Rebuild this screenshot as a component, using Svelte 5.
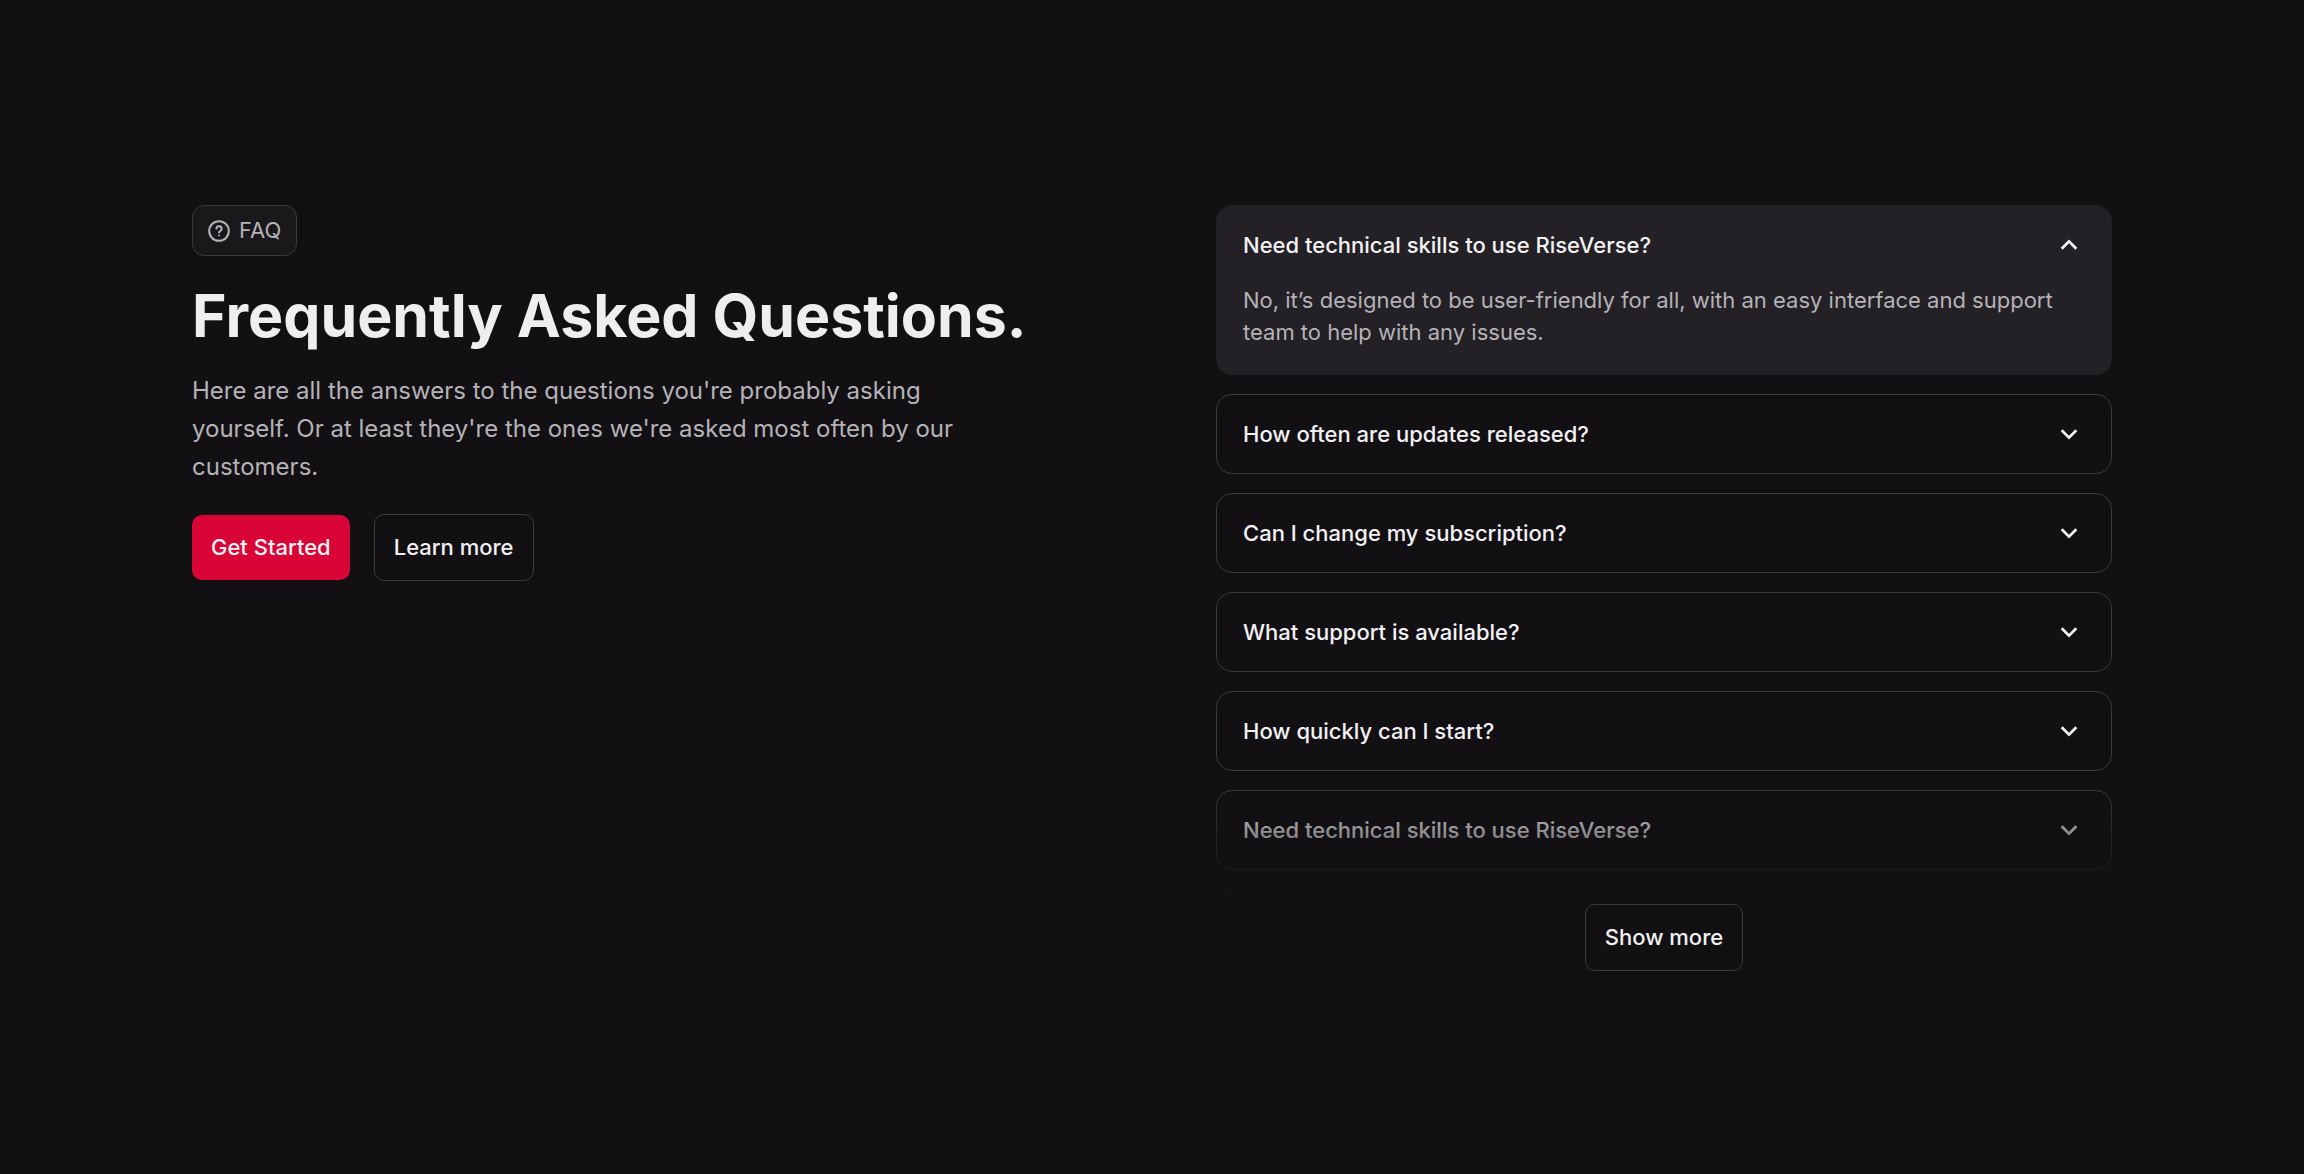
<script lang="ts">
    interface Faq {
        question: string;
        answer: string;
    }

    const faqs: Faq[] = [
        {
            question: 'Need technical skills to use RiseVerse?',
            answer: 'No, it’s designed to be user-friendly for all, with an easy interface and support team to help with any issues.',
        },
        {
            question: 'How often are updates released?',
            answer: 'Updates are released regularly.',
        },
        {
            question: 'Can I change my subscription?',
            answer: 'Yes, you can change it at any time.',
        },
        {
            question: 'What support is available?',
            answer: 'Our support team helps with any issues.',
        },
        {
            question: 'How quickly can I start?',
            answer: 'You can start right away.',
        },
        {
            question: 'Need technical skills to use RiseVerse?',
            answer: 'No, it’s designed to be user-friendly for all.',
        },
        {
            question: 'How often are updates released?',
            answer: 'Updates are released regularly.',
        },
    ];

    let openIndex = $state(0);
    let expanded = $state(false);

    function toggle(index: number) {
        openIndex = openIndex === index ? -1 : index;
    }
</script>

<section class="faq">
    <div class="container">
        <div class="intro">
            <span class="badge">
                <svg class="badge-icon" viewBox="0 0 22 22" fill="none" stroke="currentColor" stroke-width="2" stroke-linecap="round" stroke-linejoin="round" aria-hidden="true">
                    <circle cx="11" cy="11" r="9.8" />
                    <path d="M8.4 8.6a2.6 2.6 0 0 1 5.2 .4c0 1.8-2.5 2-2.6 3.6" />
                    <path d="M11 15.6h.01" />
                </svg>
                FAQ
            </span>
            <h2 class="title">Frequently Asked Questions.</h2>
            <p class="lead">
                Here are all the answers to the questions you're probably asking yourself. Or at least they're the ones we're asked most often by our customers.
            </p>
            <div class="actions">
                <button class="btn btn-primary">Get Started</button>
                <button class="btn btn-outline">Learn more</button>
            </div>
        </div>

        <div class="list">
            {#each faqs as faq, i}
                <div class="item" class:open={openIndex === i}>
                    <button class="question" aria-expanded={openIndex === i} onclick={() => toggle(i)}>
                        {faq.question}
                        <svg class="chevron" viewBox="0 0 24 24" fill="none" stroke="currentColor" stroke-width="3" aria-hidden="true">
                            <path d="M4 8l8 8 8-8" />
                        </svg>
                    </button>
                    {#if openIndex === i}
                        <p class="answer">{faq.answer}</p>
                    {/if}
                </div>
            {/each}
            {#if !expanded}
                <div class="fade">
                    <button class="btn btn-outline" onclick={() => (expanded = true)}>Show more</button>
                </div>
            {/if}
        </div>
    </div>
</section>

<style>
    :global(body) {
        margin: 0;
        background: #121013;
    }

    .faq {
        display: flex;
        align-items: center;
        justify-content: center;
        box-sizing: border-box;
        min-height: 100vh;
        padding: 64px;
        font-family: Inter, "Liberation Sans", sans-serif;
        color: #f2f1f4;
    }

    .container {
        display: grid;
        grid-template-columns: repeat(2, minmax(0, 1fr));
        gap: 128px;
        width: 100%;
        max-width: 1920px;
    }

    .intro {
        display: flex;
        flex-direction: column;
        align-items: flex-start;
    }

    .badge {
        display: flex;
        align-items: center;
        gap: 9px;
        padding: 8px 15px;
        border: 1px solid #3c3a3f;
        border-radius: 12px;
        background: #1a181b;
        color: #b5b2b8;
        font-size: 22px;
        line-height: 33px;
    }

    .badge-icon {
        width: 22px;
        height: 22px;
    }

    .title {
        margin: 24px 0 20px;
        color: #eeedf0;
        font-size: 59px;
        font-weight: 700;
        line-height: 72px;
    }

    .lead {
        max-width: 768px;
        margin: 0;
        color: #b5b2b8;
        font-size: 24px;
        line-height: 38px;
    }

    .actions {
        display: flex;
        align-items: center;
        gap: 24px;
        margin-top: 28px;
    }

    .btn {
        padding: 16px 19px;
        border: none;
        border-radius: 10px;
        font-family: inherit;
        font-size: 22px;
        font-weight: 500;
        line-height: 33px;
        color: inherit;
        cursor: pointer;
    }

    .btn-primary {
        background: #d90537;
    }

    .btn-outline {
        border: 1px solid #3c3a3f;
        background: #121013;
    }

    .list {
        position: relative;
        display: flex;
        flex-direction: column;
        gap: 19px;
    }

    .item {
        border: 1px solid #3c3a3f;
        border-radius: 16px;
    }

    .item.open {
        border-color: #232125;
        background: #232125;
    }

    .question {
        display: flex;
        align-items: center;
        justify-content: space-between;
        width: 100%;
        padding: 23px 31px 23px 26px;
        border: none;
        background: none;
        font-family: inherit;
        font-size: 22px;
        font-weight: 500;
        line-height: 32px;
        text-align: left;
        color: inherit;
        cursor: pointer;
    }

    .chevron {
        width: 22px;
        height: 22px;
    }

    .open .chevron {
        transform: rotate(180deg);
    }

    .answer {
        margin: 0;
        padding: 0 26px 26px;
        color: #b5b2b8;
        font-size: 22px;
        line-height: 32px;
    }

    /* sits over the last items and reaches just past the list */
    .fade {
        position: absolute;
        inset: auto 0 -2px;
        display: flex;
        align-items: flex-end;
        justify-content: center;
        height: 192px;
        background: linear-gradient(to top, rgba(18, 16, 19, 0.8), #121013 5px, #121013 37%, transparent);
    }
</style>
